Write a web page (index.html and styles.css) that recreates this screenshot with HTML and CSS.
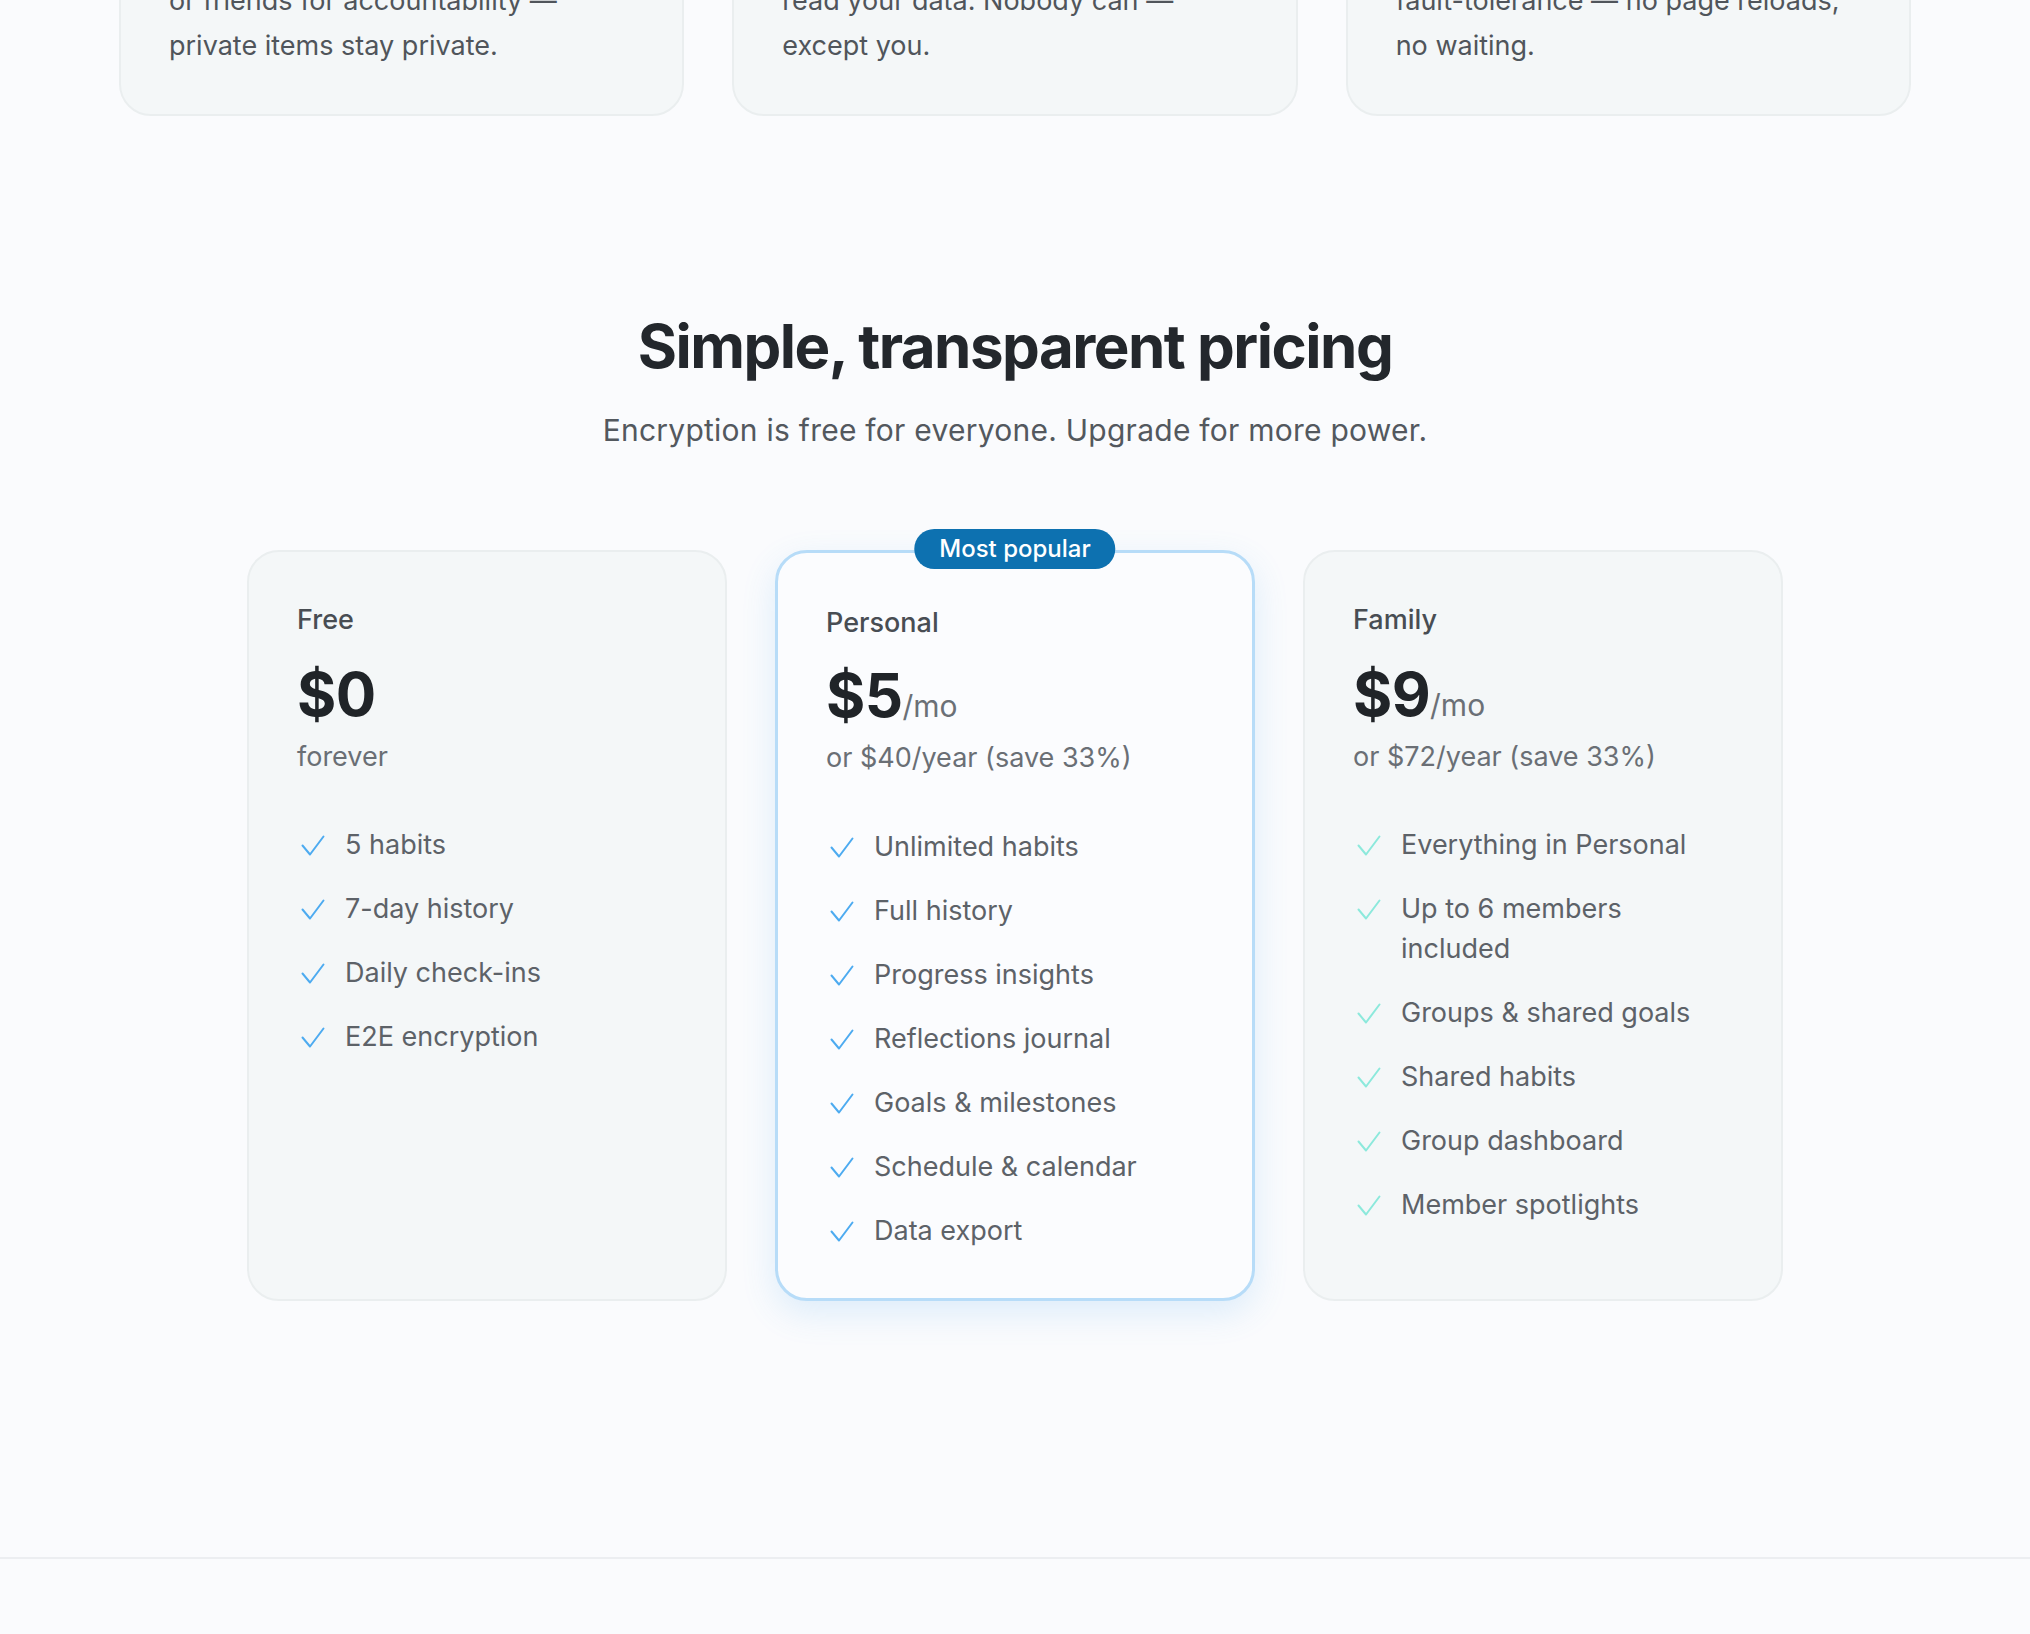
FILE: index.html
```html
<!DOCTYPE html>
<html lang="en">
<head>
<meta charset="utf-8">
<title>Pricing</title>
<link rel="stylesheet" href="styles.css">
</head>
<body>
<div class="scroll-top">
  <section class="features">
    <div class="feature-card">
      <h3 class="feature-title">Share with your circle</h3>
      <p class="feature-text">Invite family<br>or friends for accountability —<br>private items stay private.</p>
    </div>
    <div class="feature-card">
      <h3 class="feature-title">End-to-end encrypted</h3>
      <p class="feature-text">We can't<br>read your data. Nobody can —<br>except you.</p>
    </div>
    <div class="feature-card">
      <h3 class="feature-title">Instant sync</h3>
      <p class="feature-text">Built for<br>fault-tolerance — no page reloads,<br>no waiting.</p>
    </div>
  </section>
</div>

<section class="pricing">
  <h2 class="pricing-title">Simple, transparent pricing</h2>
  <p class="pricing-sub">Encryption is free for everyone. Upgrade for more power.</p>

  <div class="plans">
    <div class="plan">
      <div class="plan-name">Free</div>
      <div class="plan-price"><span class="amount">$0</span></div>
      <div class="plan-note">forever</div>
      <ul class="plan-list">
        <li><svg class="check" viewBox="0 0 26 24"><path d="M5 12.5 L12.5 21.5 L26 3.5"/></svg><span>5 habits</span></li>
        <li><svg class="check" viewBox="0 0 26 24"><path d="M5 12.5 L12.5 21.5 L26 3.5"/></svg><span>7-day history</span></li>
        <li><svg class="check" viewBox="0 0 26 24"><path d="M5 12.5 L12.5 21.5 L26 3.5"/></svg><span>Daily check-ins</span></li>
        <li><svg class="check" viewBox="0 0 26 24"><path d="M5 12.5 L12.5 21.5 L26 3.5"/></svg><span>E2E encryption</span></li>
      </ul>
    </div>

    <div class="plan plan-popular">
      <span class="badge">Most popular</span>
      <div class="plan-name">Personal</div>
      <div class="plan-price"><span class="amount">$5</span><span class="per">/mo</span></div>
      <div class="plan-note">or $40/year (save 33%)</div>
      <ul class="plan-list">
        <li><svg class="check" viewBox="0 0 26 24"><path d="M5 12.5 L12.5 21.5 L26 3.5"/></svg><span>Unlimited habits</span></li>
        <li><svg class="check" viewBox="0 0 26 24"><path d="M5 12.5 L12.5 21.5 L26 3.5"/></svg><span>Full history</span></li>
        <li><svg class="check" viewBox="0 0 26 24"><path d="M5 12.5 L12.5 21.5 L26 3.5"/></svg><span>Progress insights</span></li>
        <li><svg class="check" viewBox="0 0 26 24"><path d="M5 12.5 L12.5 21.5 L26 3.5"/></svg><span>Reflections journal</span></li>
        <li><svg class="check" viewBox="0 0 26 24"><path d="M5 12.5 L12.5 21.5 L26 3.5"/></svg><span>Goals &amp; milestones</span></li>
        <li><svg class="check" viewBox="0 0 26 24"><path d="M5 12.5 L12.5 21.5 L26 3.5"/></svg><span>Schedule &amp; calendar</span></li>
        <li><svg class="check" viewBox="0 0 26 24"><path d="M5 12.5 L12.5 21.5 L26 3.5"/></svg><span>Data export</span></li>
      </ul>
    </div>

    <div class="plan plan-family">
      <div class="plan-name">Family</div>
      <div class="plan-price"><span class="amount">$9</span><span class="per">/mo</span></div>
      <div class="plan-note">or $72/year (save 33%)</div>
      <ul class="plan-list">
        <li><svg class="check" viewBox="0 0 26 24"><path d="M5 12.5 L12.5 21.5 L26 3.5"/></svg><span>Everything in Personal</span></li>
        <li><svg class="check" viewBox="0 0 26 24"><path d="M5 12.5 L12.5 21.5 L26 3.5"/></svg><span>Up to 6 members included</span></li>
        <li><svg class="check" viewBox="0 0 26 24"><path d="M5 12.5 L12.5 21.5 L26 3.5"/></svg><span>Groups &amp; shared goals</span></li>
        <li><svg class="check" viewBox="0 0 26 24"><path d="M5 12.5 L12.5 21.5 L26 3.5"/></svg><span>Shared habits</span></li>
        <li><svg class="check" viewBox="0 0 26 24"><path d="M5 12.5 L12.5 21.5 L26 3.5"/></svg><span>Group dashboard</span></li>
        <li><svg class="check" viewBox="0 0 26 24"><path d="M5 12.5 L12.5 21.5 L26 3.5"/></svg><span>Member spotlights</span></li>
      </ul>
    </div>
  </div>
</section>

<footer class="footer"></footer>
</body>
</html>
```

FILE: styles.css
```css
* { box-sizing: border-box; }

html, body {
  margin: 0;
  padding: 0;
  background: #fafbfd;
  font-family: Inter, "Noto Sans", "Liberation Sans", sans-serif;
  color: #24282d;
}

/* the page is scrolled: only the bottom of the feature cards is visible */
.scroll-top {
  height: 116px;
  overflow: hidden;
  display: flex;
  flex-direction: column;
  justify-content: flex-end;
}

.features {
  width: 1792px;
  margin: 0 auto;
  display: grid;
  grid-template-columns: repeat(3, 1fr);
  align-items: end;
  gap: 48px;
  flex-shrink: 0;
}

.feature-card {
  background: #f4f7f8;
  border: 2px solid #eaeeef;
  border-radius: 32px;
  padding: 48px 48px 46px 48px;
}

.feature-title {
  margin: 0 0 16px;
  font-size: 30px;
  font-weight: 600;
}

.feature-text {
  margin: 0;
  font-size: 27px;
  line-height: 45px;
  color: #50555b;
}

.pricing {
  padding-top: 194px;
  padding-bottom: 256px;
}

.pricing-title {
  margin: 0;
  text-align: center;
  font-size: 60px;
  line-height: 72px;
  font-weight: 700;
  letter-spacing: -0.025em;
  color: #23272c;
}

.pricing-sub {
  margin: 26px 0 0;
  text-align: center;
  font-size: 30px;
  line-height: 44px;
  letter-spacing: 0.25px;
  color: #53585e;
}

.plans {
  width: 1536px;
  margin: 98px auto 0;
  display: grid;
  grid-template-columns: repeat(3, 1fr);
  gap: 48px;
}

.plan {
  position: relative;
  background: #f4f7f8;
  border: 2px solid #eaeeef;
  border-radius: 32px;
  padding: 48px 48px 47px;
}

.plan-popular {
  background: #fbfcfe;
  border: 3px solid #b7dcf8;
  box-shadow: 0 12px 34px rgba(70, 160, 235, 0.16);
}

.badge {
  position: absolute;
  top: -24px;
  left: 50%;
  transform: translateX(-50%);
  height: 40px;
  padding: 0 25px;
  border-radius: 20px;
  background: #0d71b0;
  color: #ffffff;
  font-size: 24px;
  font-weight: 500;
  line-height: 40px;
  white-space: nowrap;
}

.plan-name {
  font-size: 27px;
  line-height: 40px;
  font-weight: 500;
  color: #484d53;
}

.plan-popular .plan-name {
  margin-top: 2px;
}

.plan-price {
  margin-top: 24px;
  display: flex;
  align-items: baseline;
  height: 60px;
  line-height: 60px;
}

.plan-popular .plan-price {
  margin-top: 22px;
}

.amount {
  font-size: 60px;
  font-weight: 700;
  color: #202428;
  letter-spacing: -0.01em;
}

.per {
  font-size: 30px;
  color: #6b7076;
}

.plan-note {
  margin-top: 13px;
  font-size: 27px;
  line-height: 40px;
  color: #6a6f75;
}

.plan-list {
  list-style: none;
  margin: 48px 0 0;
  padding: 0;
  display: flex;
  flex-direction: column;
  gap: 24px;
}

.plan-popular .plan-list {
  margin-top: 49px;
}

.plan-list li {
  display: flex;
  align-items: flex-start;
  gap: 21px;
  font-size: 27px;
  line-height: 40px;
  color: #5d6268;
}

.check {
  flex: 0 0 27px;
  width: 27px;
  height: 24px;
  margin-top: 8px;
  overflow: visible;
}

.check path {
  fill: none;
  stroke: #4dabf0;
  stroke-width: 2;
  stroke-linecap: round;
  stroke-linejoin: round;
}

.plan-family .check path {
  stroke: #8ce9dc;
}

.footer {
  border-top: 2px solid #eceef1;
  height: 120px;
}
```
